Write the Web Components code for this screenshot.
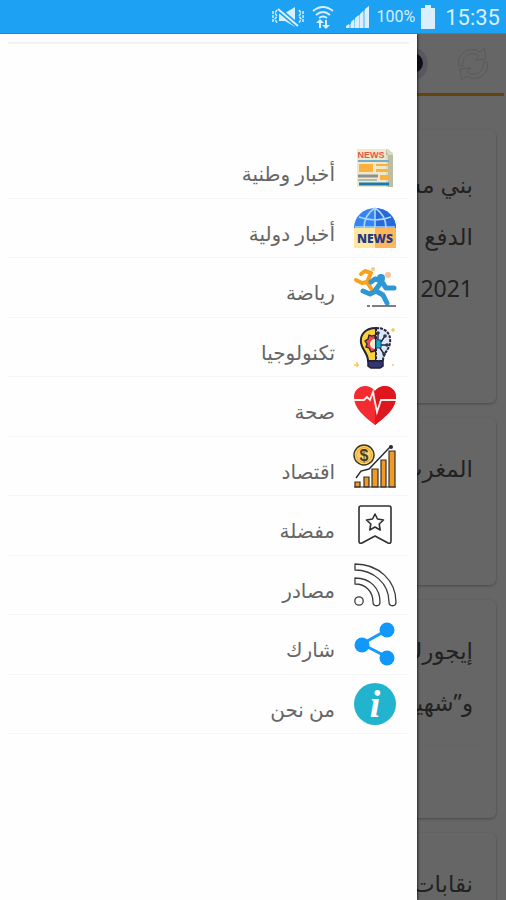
<!DOCTYPE html>
<html lang="ar" dir="rtl">
<head>
<meta charset="utf-8">
<meta name="viewport" content="width=device-width, initial-scale=1">
<title>أخبار</title>
<style>
  body { margin: 0; font-family: "Noto Sans", "DejaVu Sans", sans-serif; }
</style>
</head>
<body>
<news-app>
  <status-bar slot="status" time="15:35" battery="100%"></status-bar>
  <app-toolbar slot="page"></app-toolbar>
  <news-card slot="page" size="large">بني مسكين<br>الدفع<br>2021</news-card>
  <news-card slot="page" size="small">المغرب</news-card>
  <news-card slot="page" size="medium">إيجورك<br>و”شهيد</news-card>
  <news-card slot="page" size="small">نقابات</news-card>

  <side-drawer slot="drawer">
    <menu-item>
      <svg slot="icon" viewBox="0 0 44 44">
        <path d="M8 3h27l5 4v34H5V3z" fill="#d9dcc4"/><path d="M33 3v6h7v32h-5V9z" fill="#b9bea4"/>
        <path d="M4 3h29v38H4z" fill="#efe9cc"/>
        <text x="18" y="12" text-anchor="middle" direction="ltr" font-family="Liberation Sans, sans-serif" font-weight="bold" font-size="9" fill="#e2574c">NEWS</text>
        <path d="M5 15h31" stroke="#72aecb" stroke-width="2"/>
        <path d="M6 18h14v8H6zM23 18h13v2H23zM23 23h13v3H23zM27 29h9v5h-9z" fill="#fbb040"/>
        <path d="M5 30h20" stroke="#8c9093" stroke-width="3"/><path d="M5 34h19" stroke="#b7b8ae" stroke-width="2"/>
        <path d="M6 38h30" stroke="#1979b0" stroke-width="3"/>
      </svg>
      أخبار وطنية
    </menu-item>
    <menu-item>
      <svg slot="icon" viewBox="0 0 44 44">
        <path d="M1 22a21 20 0 0 1 42 0z" fill="#3584f3"/><path d="M22 2a21 20 0 0 1 21 20H22z" fill="#2868d8"/>
        <path d="M22 2v20M22 2C14 7 11 14 11 22M22 2c8 5 11 12 11 20M6 11q16 6 32 0M2 21h40" fill="none" stroke="#a9d7ff" stroke-width="1.6"/>
        <path d="M1 22h21v20H1z" fill="#ffe7a0"/><path d="M22 22h21v20H22z" fill="#ffb65c"/>
        <text x="22" y="37" text-anchor="middle" direction="ltr" font-family="Open Sans, sans-serif" font-weight="800" font-size="12" fill="#253a80">NEWS</text>
      </svg>
      أخبار دولية
    </menu-item>
    <menu-item>
      <svg slot="icon" viewBox="0 -5 44 44">
        <g fill="none" stroke="#f9a11b" stroke-width="4" stroke-linecap="round" stroke-linejoin="round">
          <path d="M8 4l4-3 6 2-4 9-5 1-6-3M14 12l5 8"/>
        </g>
        <circle cx="20" cy="-1" r="2" fill="#fac87e"/><circle cx="35" cy="5" r="3" fill="#fac19b"/>
        <g fill="none" stroke="#2f97d4" stroke-width="5" stroke-linecap="round" stroke-linejoin="round">
          <path d="M18 12l4-3 7 2-8 11-4 2-7-3M29 12l4 6h8M23 21l7 4 4 8"/>
        </g>
        <circle cx="28" cy="8" r="4" fill="#2f97d4"/>
        <path d="M14 36h3M19 36h24" stroke="#52565a" stroke-width="1.6"/>
      </svg>
      رياضة
    </menu-item>
    <menu-item>
      <svg slot="icon" viewBox="0 -2 44 44">
        <path d="M23 1C11 1 7 9 8 16c1 7 7 10 7 18h8z" fill="#fdd13a" stroke="#252538" stroke-width="2"/>
        <path d="M23 1c12 0 15 8 14 15-1 7-7 10-7 18h-7z" fill="#dce7fb" stroke="#252538" stroke-width="2" stroke-dasharray="3 1"/>
        <path d="M22 8l-3 1-3-1-1 4-3 2 2 3-1 3 3 1 2 4 4-1z" fill="#e54b4b" stroke="#252538" stroke-width="1.3"/>
        <path d="M22 12a5 5 0 0 0 0 10z" fill="#f5ead5"/>
        <path d="M23 13h5v8h-5z" fill="#14a8d2" stroke="#1d5269"/>
        <path d="M25 13V6M28 15l4-6M28 18h6M27 21l4 6" stroke="#252538" stroke-width="1.4"/>
        <g fill="#34344b"><circle cx="25" cy="6" r="1.8"/><circle cx="32" cy="9" r="1.8"/><circle cx="34" cy="18" r="1.8"/><circle cx="31" cy="27" r="1.8"/></g>
        <path d="M15 34h15v5l-3 2h-9l-3-2z" fill="#34346e" stroke="#201f38" stroke-width="1.5"/>
        <path d="M40 1v4M38 3h4M4 35v5M1 38h5M39 38h2" stroke="#f8c85d" stroke-width="1.5"/>
      </svg>
      تكنولوجيا
    </menu-item>
    <menu-item>
      <svg slot="icon" viewBox="0 0 44 44">
        <path d="M22 41C12 33 1 25 1 13 1 2 15-2 22 7 29-2 43 2 43 13c0 12-11 20-21 28z" fill="#f52b32"/>
        <path d="M22 7c7-9 21-5 21 6 0 12-11 20-21 28z" fill="#e0161e"/>
        <path d="M1 16h10l3-3 3 3 3-8 4 20 4-12h15" fill="none" stroke="#fff2ee" stroke-width="1.8"/>
      </svg>
      صحة
    </menu-item>
    <menu-item>
      <svg slot="icon" viewBox="0 0 44 44">
        <g fill="#f39a24" stroke="#33302b" stroke-width="1.2"><path d="M2 38h5v5H2zM11 33h5v10h-5zM19 25h6v18h-6zM28 16h5v27h-5zM36 7h6v36h-6z"/></g>
        <path d="M1 43h42" stroke="#33302b" stroke-width="1.2"/>
        <circle cx="11" cy="11" r="10" fill="#ffd16a" stroke="#42341d" stroke-width="1.4"/><circle cx="11" cy="11" r="7.4" fill="none" stroke="#e8a530"/>
        <text x="11" y="17" text-anchor="middle" direction="ltr" font-family="Liberation Sans, sans-serif" font-weight="bold" font-size="16" fill="#4d3b1d">$</text>
        <path d="M3 34l5-7 8-2L37 3" fill="none" stroke="#292a2d" stroke-width="1.4"/><circle cx="38" cy="3" r="2" fill="#292a2d"/>
      </svg>
      اقتصاد
    </menu-item>
    <menu-item>
      <svg slot="icon" viewBox="0 0 44 44" fill="none" stroke="#303030" stroke-width="1.6" stroke-linejoin="round">
        <path d="M8 3h28q2 0 2 2v33q0 3-3 2L22 33 9 40q-3 1-3-2V5q0-2 2-2z"/>
        <path d="M22 11l2.500 5 6 1-4.300 4 1 6-5.200-3-5.200 3 1-6-4.300-4 6-1z"/>
      </svg>
      مفضلة
    </menu-item>
    <menu-item>
      <svg slot="icon" viewBox="0 0 44 44" fill="none" stroke="#3c3c3c" stroke-width="1.3" stroke-linejoin="round">
        <path d="M2 1c24 0 41 17 41 38 0 5-7 5-7 0C36 20 20 7 2 7zM2 15c16 0 25 11 25 24 0 5-7 5-7 0 0-10-7-18-18-18z"/>
        <circle cx="6" cy="38" r="4.200"/>
      </svg>
      مصادر
    </menu-item>
    <menu-item>
      <svg slot="icon" viewBox="0 0 44 44">
        <path d="M34 8L9 22l25 13" fill="none" stroke="#159bfa" stroke-width="3"/>
        <g fill="#1298fb"><circle cx="34" cy="8" r="7.500"/><circle cx="9" cy="23" r="7.500"/><circle cx="34" cy="36" r="7.500"/></g>
      </svg>
      شارك
    </menu-item>
    <menu-item>
      <svg slot="icon" viewBox="0 0 44 44">
        <circle cx="22" cy="22" r="21" fill="#22b3cf"/>
        <text x="22" y="35" text-anchor="middle" direction="ltr" font-family="Liberation Serif, serif" font-weight="bold" font-style="italic" font-size="38" fill="#fff">i</text>
      </svg>
      من نحن
    </menu-item>
  </side-drawer>
</news-app>

<script>
class NewsApp extends HTMLElement {
  constructor() {
    super();
    this.attachShadow({ mode: 'open' }).innerHTML = `
      <style>
        :host { display: flex; flex-direction: column; height: 100vh; overflow: hidden; background: #fff; }
        .stage { position: relative; flex: 1; min-height: 0; overflow: hidden; }
        .scrim { position: absolute; inset: 0; background: rgba(0, 0, 0, 0.6); }
        main { display: flex; flex-direction: column; gap: 15px; }
      </style>
      <slot name="status"></slot>
      <div class="stage">
        <main><slot name="page"></slot></main>
        <div class="scrim"></div>
        <slot name="drawer"></slot>
      </div>
    `;
  }
}

class StatusBar extends HTMLElement {
  constructor() {
    super();
    this.attachShadow({ mode: 'open' });
  }

  connectedCallback() {
    this.shadowRoot.innerHTML = `
      <style>
        :host {
          display: flex;
          align-items: center;
          justify-content: flex-end;
          direction: ltr;
          height: 34px;
          padding: 0 6px;
          box-sizing: border-box;
          background: #1da1f2;
          border-bottom: 1px solid #108fe0;
          color: #d9effc;
          font-family: Roboto, sans-serif;
        }
        svg { display: block; flex: none; fill: currentColor; }
        .mute { margin-right: 8px; }
        .wifi { margin-right: 12px; }
        .signal { margin-right: 8px; }
        .level { font-size: 16px; margin-right: 6px; }
        .battery { margin-right: 10px; }
        .time { font-size: 22px; line-height: 34px; padding-top: 3px; }
      </style>
      <svg class="mute" width="32" height="22" viewBox="0 0 32 22">
        <path d="M7 7h6l10-6v20l-10-6H7z"/>
        <path d="M6 3l20 17" stroke="#1da1f2" stroke-width="5"/>
        <path d="M6 3l20 17" stroke="currentColor" stroke-width="2"/>
        <path d="M5 4L3 7l2 3-2 3 2 4M1 5v12M27 4l2 3-2 3 2 3-2 4M31 5v12" fill="none" stroke="currentColor" stroke-width="1.500" stroke-dasharray="3 1"/>
      </svg>
      <svg class="wifi" width="22" height="24" viewBox="0 0 22 24">
        <path d="M1 6q10-8 20 0M4 10q7-6 14 0M7 13q4-3 8 0" fill="none" stroke="currentColor" stroke-width="2"/>
        <path d="M8 14l4 4h-3v2H7v-2H4zM14 24l-4-4h3v-5h2v5h3zM7 18h2v5H7z"/>
      </svg>
      <svg class="signal" width="23" height="22" viewBox="0 0 23 22">
        <path d="M0 22v-2l3-2v4zM5 22v-6l3-3v9zM9 22V12l4-3v13zM14 22V8l3-3v17zM19 22V3l4-3v22z"/>
        <path d="M0 22L23 0v22z" opacity="0.6"/>
      </svg>
      <span class="level">${this.getAttribute('battery')}</span>
      <svg class="battery" width="14" height="24" viewBox="0 0 14 24"><path d="M4 0h6v3h4v21H0V3h4z"/></svg>
      <span class="time">${this.getAttribute('time')}</span>
    `;
  }
}

class AppToolbar extends HTMLElement {
  constructor() {
    super();
    this.attachShadow({ mode: 'open' }).innerHTML = `
      <style>
        :host {
          display: flex;
          align-items: center;
          gap: 28px;
          height: 59px;
          padding-right: 14px;
          margin: 0 2px 19px;
          border-bottom: 3px solid #ffa81c;
        }
        button { border: 0; padding: 0; background: none; }
        svg { display: block; }
      </style>
      <button aria-label="تحديث">
        <svg width="34" height="34" viewBox="0 0 34 34" fill="none" stroke="#dedede" stroke-width="1">
          <path d="M3 19C0 7 13-2 24 5l4-4 2 11-11 1 4-4C15 3 5 10 7 19zM31 15c3 12-10 21-21 14l-4 4-2-11 11-1-4 4c8 6 18-1 16-10z"/>
        </svg>
      </button>
      <button aria-label="الوضع الليلي">
        <svg width="34" height="34" viewBox="0 0 34 34"><circle cx="17" cy="17" r="17" fill="#dddbe8"/><circle cx="19" cy="16" r="10" fill="#28234d"/></svg>
      </button>
    `;
  }
}

class NewsCard extends HTMLElement {
  constructor() {
    super();
    this.attachShadow({ mode: 'open' }).innerHTML = `
      <style>
        :host {
          display: block;
          box-sizing: border-box;
          flex: none;
          min-height: 167px;
          margin: 0 10px;
          padding: 24px 23px;
          border-radius: 6px;
          box-shadow: 0 1px 3px rgba(0, 0, 0, 0.3);
          color: #555;
          font-size: 23px;
          line-height: 52px;
        }
        :host([size="medium"]) { min-height: 218px; }
        :host([size="large"]) { min-height: 273px; padding-top: 28px; }
        hr { margin: 16px -7px 0; border: 0; border-top: 1px solid #f9f9f9; }
      </style>
      <slot></slot>
      <hr>
    `;
  }
}

class SideDrawer extends HTMLElement {
  constructor() {
    super();
    this.attachShadow({ mode: 'open' }).innerHTML = `
      <style>
        :host {
          position: absolute;
          top: 0;
          bottom: 0;
          left: 0;
          right: 89px;
          background: #fefefe;
          box-shadow: 1px 0 2px rgba(0, 0, 0, 0.6);
        }
        header { height: 97px; margin: 0 8px; padding-top: 8px; }
        hr { margin: 0; border: 0; border-top: 2px solid #f3f3f0; }
        nav { display: grid; grid-auto-rows: 1fr; height: 595px; margin: 0 8px; }
      </style>
      <header><hr></header>
      <nav><slot></slot></nav>
    `;
  }
}

class MenuItem extends HTMLElement {
  constructor() {
    super();
    this.attachShadow({ mode: 'open' }).innerHTML = `
      <style>
        :host { display: block; border-bottom: 1px solid #f6f6f6; }
        a {
          display: flex;
          align-items: center;
          gap: 18px;
          height: 100%;
          padding-right: 12px;
          color: #666;
          font-size: 20px;
          line-height: 24px;
          text-decoration: none;
        }
        .label { padding-top: 12px; }
        ::slotted(svg) { display: block; width: 44px; height: 44px; overflow: visible; }
      </style>
      <a href="#"><slot name="icon"></slot><span class="label"><slot></slot></span></a>
    `;
  }
}

customElements.define('news-app', NewsApp);
customElements.define('status-bar', StatusBar);
customElements.define('app-toolbar', AppToolbar);
customElements.define('news-card', NewsCard);
customElements.define('side-drawer', SideDrawer);
customElements.define('menu-item', MenuItem);
</script>
</body>
</html>
